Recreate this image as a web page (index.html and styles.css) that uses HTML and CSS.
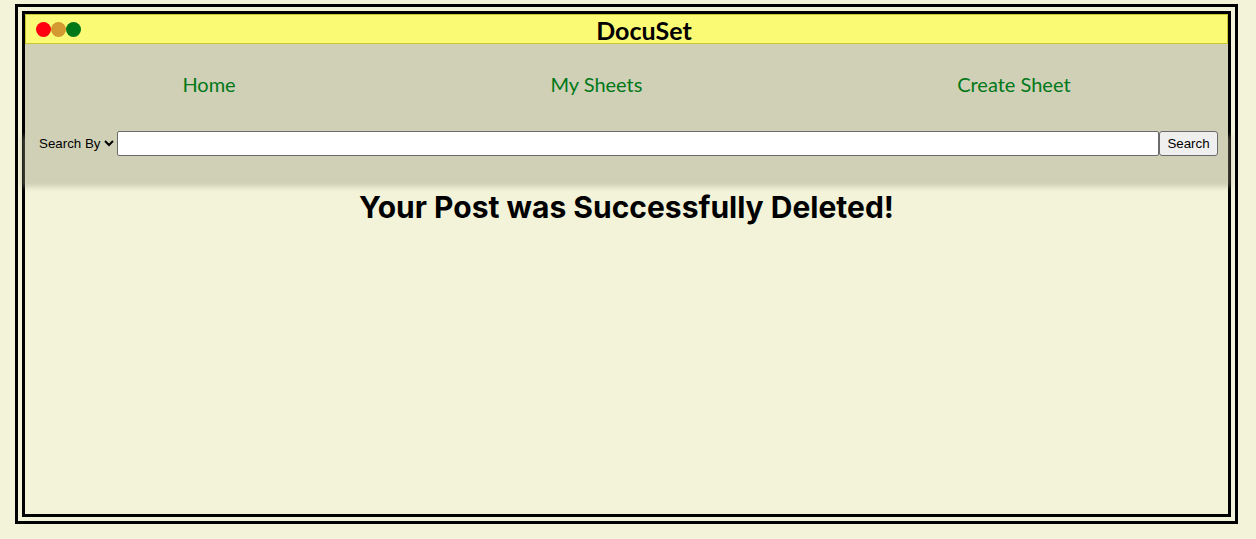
FILE: index.html
```
<!DOCTYPE html>
<html lang="en">
<head>
<meta charset="utf-8">
<title>DocuSet</title>
<link rel="stylesheet" href="styles.css">
</head>
<body>
<div class="window">
  <header class="titlebar">
    <div class="lights">
      <span class="light light-red"></span>
      <span class="light light-amber"></span>
      <span class="light light-green"></span>
    </div>
    <h1 class="brand">DocuSet</h1>
  </header>
  <nav class="menu">
    <a class="menu-link" href="#home">Home</a>
    <a class="menu-link" href="#sheets">My Sheets</a>
    <a class="menu-link" href="#create">Create Sheet</a>
  </nav>
  <form class="search">
    <select class="search-by" aria-label="Search by"><option>Search By</option></select>
    <input class="search-text" type="text" aria-label="Search text">
    <button class="search-button" type="submit">Search</button>
  </form>
  <main class="content">
    <h2 class="message">Your Post was Successfully Deleted!</h2>
  </main>
</div>
</body>
</html>
```
FILE: styles.css
```
* { box-sizing: border-box; }

body {
  margin: 0;
  padding: 4px 18px 15px 15px;
  min-height: 100vh;
  display: flex;
  background: #f3f3d9;
  font-family: "Liberation Sans", Arial, sans-serif;
}

.window {
  flex: 1;
  display: flex;
  flex-direction: column;
  border: 10px double #000;
}

.titlebar {
  display: flex;
  align-items: center;
  height: 30px;
  padding: 0 20px 0 10px;
  border: 1px solid #c8c832;
  background: #fafa75;
}

.lights { display: flex; }

.light {
  width: 15px;
  height: 15px;
  border-radius: 50%;
}

.light-red { background: #ff0010; }
.light-amber { background: #d29a30; }
.light-green { background: #007818; }

.brand {
  flex: 1;
  margin: 0;
  padding-top: 2px;
  font: 700 25px/26px Papyrus, Lato, sans-serif;
  text-align: center;
}

.menu {
  display: flex;
  justify-content: space-around;
  padding: 28px 0 24px;
  background: #d0d0b7;
}

.menu-link {
  color: #007818;
  font: 400 20px/25px Papyrus, Lato, sans-serif;
  text-decoration: none;
}

.search {
  display: flex;
  padding: 10px;
  background: #d0d0b7;
  box-shadow: 0 18px 5px 3px rgba(160, 160, 136, 0.42);
}

.search-by,
.search-text,
.search-button {
  height: 25px;
  font-family: "Liberation Sans", Arial, sans-serif;
  color: #000;
}

.search-by {
  width: 82px;
  border: 0;
  background: transparent;
}

.search-text {
  flex: 1;
  min-width: 0;
  border: 1px solid #6b6b6b;
  border-radius: 2px;
  background: #fff;
}

.search-button {
  width: 59px;
  padding: 0;
  border: 1px solid #6b6b6b;
  border-radius: 3px;
  background: #efefef;
}

.content { padding-top: 21px; }

.message {
  margin: 0;
  font: 700 30px/40px Inter, sans-serif;
  text-align: center;
}
```
